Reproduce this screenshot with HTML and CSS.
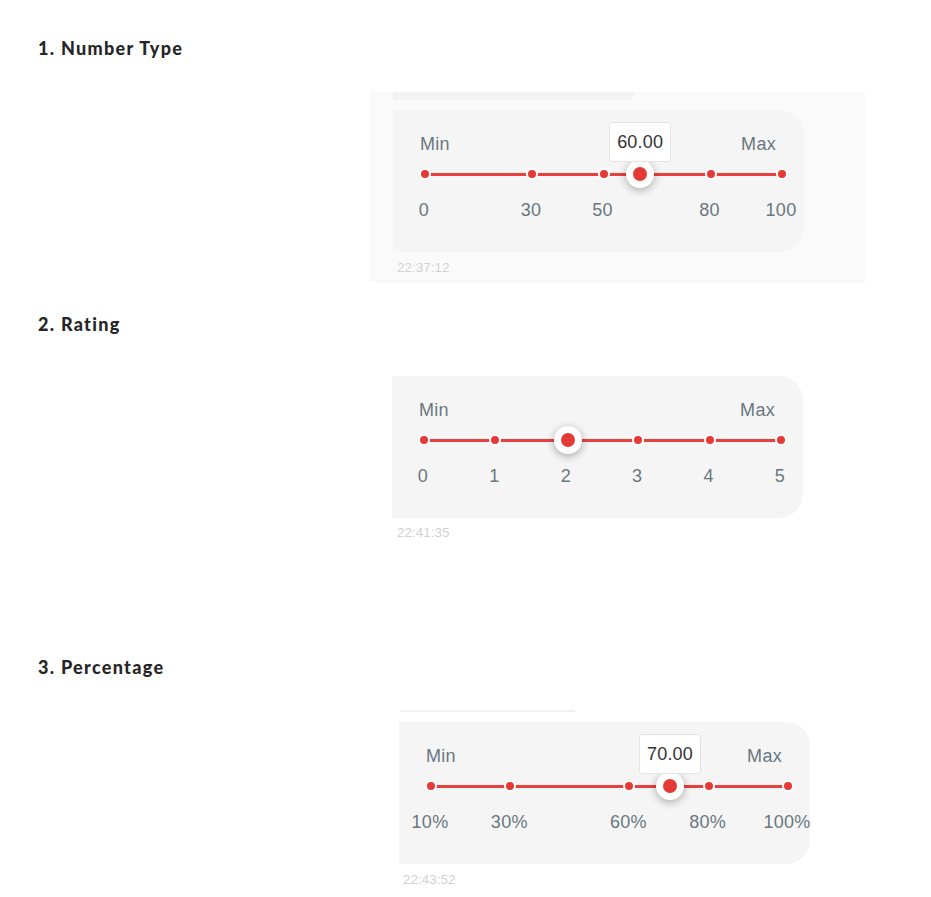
FILE: index.html
```html
<!DOCTYPE html>
<html>
<head>
<meta charset="utf-8">
<link rel="stylesheet" href="styles.css">
</head>
<body>
<div class="page">
  <h2 class="heading h1">1. Number Type</h2>
  <div class="panel">
    <div class="prev-bubble"></div>
    <div class="card">
      <div class="ends"><span>Min</span><span>Max</span></div>
      <div class="track">
        <span class="dot" style="left:0%"></span>
        <span class="dot" style="left:30%"></span>
        <span class="dot" style="left:50%"></span>
        <span class="dot" style="left:80%"></span>
        <span class="dot" style="left:100%"></span>
        <span class="thumb" style="left:60%"><span class="tip">60.00</span></span>
      </div>
      <div class="ticks">
        <span class="tick" style="left:0%">0</span>
        <span class="tick" style="left:30%">30</span>
        <span class="tick" style="left:50%">50</span>
        <span class="tick" style="left:80%">80</span>
        <span class="tick" style="left:100%">100</span>
      </div>
    </div>
    <div class="time">22:37:12</div>
  </div>

  <h2 class="heading h2">2. Rating</h2>
  <div class="card card2">
    <div class="ends"><span>Min</span><span>Max</span></div>
    <div class="track">
      <span class="dot" style="left:0%"></span>
      <span class="dot" style="left:20%"></span>
      <span class="dot" style="left:60%"></span>
      <span class="dot" style="left:80%"></span>
      <span class="dot" style="left:100%"></span>
      <span class="thumb" style="left:40%"></span>
    </div>
    <div class="ticks">
      <span class="tick" style="left:0%">0</span>
      <span class="tick" style="left:20%">1</span>
      <span class="tick" style="left:40%">2</span>
      <span class="tick" style="left:60%">3</span>
      <span class="tick" style="left:80%">4</span>
      <span class="tick" style="left:100%">5</span>
    </div>
  </div>
  <div class="time time2">22:41:35</div>

  <h2 class="heading h3">3. Percentage</h2>
  <div class="prev-line"></div>
  <div class="card card3">
    <div class="ends"><span>Min</span><span>Max</span></div>
    <div class="track">
      <span class="dot" style="left:0%"></span>
      <span class="dot" style="left:22.22%"></span>
      <span class="dot" style="left:55.56%"></span>
      <span class="dot" style="left:77.78%"></span>
      <span class="dot" style="left:100%"></span>
      <span class="thumb" style="left:66.67%"><span class="tip">70.00</span></span>
    </div>
    <div class="ticks">
      <span class="tick" style="left:0%">10%</span>
      <span class="tick" style="left:22.22%">30%</span>
      <span class="tick" style="left:55.56%">60%</span>
      <span class="tick" style="left:77.78%">80%</span>
      <span class="tick" style="left:100%">100%</span>
    </div>
  </div>
  <div class="time time3">22:43:52</div>
</div>
</body>
</html>
```

FILE: styles.css
```css
html, body {
  margin: 0;
  padding: 0;
  background: #ffffff;
}

.page {
  padding: 38px 0 20px 38px;
  display: flex;
  flex-direction: column;
  align-items: flex-start;
}

.heading {
  margin: 0;
  font-family: Lato, "Noto Sans", sans-serif;
  font-weight: 900;
  font-size: 18px;
  letter-spacing: 1.3px;
  line-height: 20px;
  color: #262626;
}

.h2 { margin-top: 33px; }
.h3 { margin-top: 116px; }

.panel {
  margin-top: 34px;
  margin-left: 332px;
  width: 472px;
  padding: 0 0 5px 23px;
  background: #fafafa;
  box-shadow: 0 1px 1px rgba(0, 0, 0, 0.04);
}

.prev-bubble {
  width: 242px;
  height: 8px;
  background: #f3f3f3;
  border-radius: 0 0 14px 0;
  margin-bottom: 10px;
}

.prev-line {
  margin-top: 33px;
  margin-left: 362px;
  width: 175px;
  height: 2px;
  background: #f1f1f1;
}

.card {
  width: 411px;
  box-sizing: border-box;
  padding: 24px 28px 32px 27px;
  background: #f5f5f5;
  border-radius: 0 24px 24px 0;
  font-family: "Liberation Sans", Arial, sans-serif;
  font-size: 18px;
  letter-spacing: 0.3px;
  color: #6a7780;
}

.card2 {
  margin-top: 42px;
  margin-left: 354px;
}

.card3 {
  margin-top: 10px;
  margin-left: 361px;
}

.ends {
  display: flex;
  justify-content: space-between;
  line-height: 20px;
  height: 20px;
}

.track {
  position: relative;
  height: 20px;
  margin: 10px -6px 0 5px;
}

.track::before {
  content: "";
  position: absolute;
  left: 0;
  right: 0;
  top: 9px;
  height: 2.5px;
  background: #e8403d;
}

.dot {
  position: absolute;
  top: 10px;
  width: 8px;
  height: 8px;
  margin: -6px 0 0 -6px;
  border: 2px solid #ffffff;
  border-radius: 50%;
  background: #e53935;
}

.thumb {
  position: absolute;
  top: 10px;
  width: 28px;
  height: 28px;
  margin: -14px 0 0 -13px;
  border-radius: 50%;
  background: #ffffff;
  box-shadow: 0 2px 8px rgba(0, 0, 0, 0.32);
}

.thumb::after {
  content: "";
  position: absolute;
  left: 7px;
  top: 7px;
  width: 14px;
  height: 14px;
  border-radius: 50%;
  background: #e53935;
}

.tip {
  position: absolute;
  bottom: calc(100% - 2px);
  left: 50%;
  transform: translateX(-50%);
  width: 62px;
  height: 40px;
  box-sizing: border-box;
  display: flex;
  align-items: center;
  justify-content: center;
  background: #ffffff;
  border: 1px solid #e4e4e4;
  border-radius: 3px;
  color: #333333;
  font-size: 18px;
  letter-spacing: 0.2px;
}

.ticks {
  position: relative;
  height: 20px;
  margin: 16px -6px 0 5px;
  line-height: 20px;
}

.tick {
  position: absolute;
  top: 0;
  transform: translateX(-50%);
  margin-left: -1px;
  white-space: nowrap;
}

.time {
  margin-top: 8px;
  padding-left: 4px;
  font-family: "Liberation Sans", Arial, sans-serif;
  font-size: 13.5px;
  line-height: 16px;
  color: #d2d2d2;
}

.time2 {
  margin-top: 7px;
  margin-left: 355px;
}

.time3 {
  margin-left: 361px;
}
```
